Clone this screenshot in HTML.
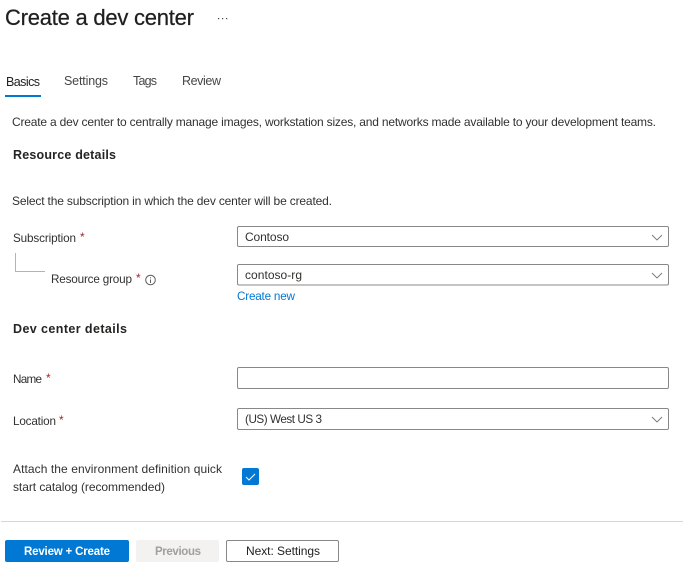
<!DOCTYPE html>
<html><head><meta charset="utf-8"><style>
html,body{margin:0;padding:0;background:#fff;width:683px;height:587px;overflow:hidden}
svg{display:block}
text{font-family:"Liberation Sans",sans-serif;font-size:12px;fill:#323130}
.b{font-weight:700;font-size:12.5px;fill:#252423}
.t{font-size:12.500px;fill:#3b3a39}
.l{font-size:11.700px}
.s{fill:#a4262c}
</style></head><body>
<svg width="683" height="587" viewBox="0 0 683 587" xmlns="http://www.w3.org/2000/svg">
<text x="5" y="25" textLength="189" style="font-size:22px;fill:#201f1e;stroke:#201f1e;stroke-width:.25">Create a dev center</text>
<g fill="#444"><rect x="218" y="18" width="1.2" height="1.2"/><rect x="222" y="18" width="1.2" height="1.2"/><rect x="226" y="18" width="1.2" height="1.2"/></g>

<text x="6" y="86" textLength="34" class="t" style="fill:#201f1e">Basics</text>
<text x="64" y="85" textLength="44" class="t" style="fill:#484644">Settings</text>
<text x="133" y="85" textLength="24" class="t" style="fill:#484644">Tags</text>
<text x="182" y="85" textLength="39" class="t" style="fill:#484644">Review</text>
<rect x="5" y="95" width="36" height="2" fill="#0078d4"/>

<text x="12" y="126" textLength="644">Create a dev center to centrally manage images, workstation sizes, and networks made available to your development teams.</text>
<text x="13" y="159" textLength="103" class="b">Resource details</text>
<text x="12" y="205" textLength="320">Select the subscription in which the dev center will be created.</text>

<text x="13" y="242" textLength="63" class="l">Subscription</text><text x="80" y="241" class="s">*</text>
<path d="M15.500 253V271.500H45" fill="none" stroke="#b5b3b1"/>
<text x="51" y="283" textLength="81" class="l">Resource group</text><text x="136" y="282" class="s">*</text>
<circle cx="150.500" cy="280" r="4.800" fill="none" stroke="#605e5c"/>
<rect x="150" y="279.500" width="1" height="3.500" fill="#605e5c"/><rect x="150" y="277.300" width="1" height="1" fill="#605e5c"/>

<rect x="237.500" y="226.500" width="431" height="20" rx="1.500" fill="#fff" stroke="#8a8886"/>
<text x="245" y="241" textLength="44">Contoso</text>
<path d="M652 235l5 5 5-5" fill="none" stroke="#77757a" stroke-width=".9"/>

<rect x="237.500" y="264.500" width="431" height="20.500" rx="1.500" fill="#fff" stroke="#8a8886"/>
<text x="245" y="279" textLength="57">contoso-rg</text>
<path d="M652 273l5 5 5-5" fill="none" stroke="#77757a" stroke-width=".9"/>
<text x="237" y="300" textLength="58" class="l" style="fill:#0078d4">Create new</text>

<text x="13" y="333" textLength="114" class="b">Dev center details</text>

<text x="13" y="383" textLength="29" class="l">Name</text><text x="46" y="382" class="s">*</text>
<rect x="237.500" y="367.500" width="431" height="21" rx="1.500" fill="#fff" stroke="#8a8886"/>

<text x="13" y="425" textLength="43" class="l">Location</text><text x="59" y="424" class="s">*</text>
<rect x="237.500" y="408.500" width="431" height="21" rx="1.500" fill="#fff" stroke="#8a8886"/>
<text x="245" y="423" textLength="77" class="l">(US) West US 3</text>
<path d="M652 417l5 5 5-5" fill="none" stroke="#77757a" stroke-width=".9"/>

<text x="13" y="473" textLength="209">Attach the environment definition quick</text>
<text x="13" y="491" textLength="152">start catalog (recommended)</text>
<rect x="242" y="468" width="17" height="17" rx="2" fill="#0078d4"/>
<path d="M246 477l3 3 6-6" fill="none" stroke="#fff"/>

<rect x="1" y="521" width="682" height="1" fill="#d6d5d4"/>

<rect x="5" y="540" width="124" height="22" rx="2" fill="#0078d4"/>
<text x="24" y="555" textLength="86" style="fill:#fff;font-weight:700;font-size:11.500px">Review + Create</text>
<rect x="136" y="540" width="83" height="22" rx="2" fill="#f3f2f1"/>
<text x="155" y="555" textLength="46" style="fill:#a19f9d;font-weight:700;font-size:11.500px">Previous</text>
<rect x="226.500" y="540.500" width="112" height="21" rx="1.500" fill="#fff" stroke="#8a8886"/>
<text x="246" y="555" textLength="74" style="fill:#201f1e">Next: Settings</text>
</svg>
</body></html>
